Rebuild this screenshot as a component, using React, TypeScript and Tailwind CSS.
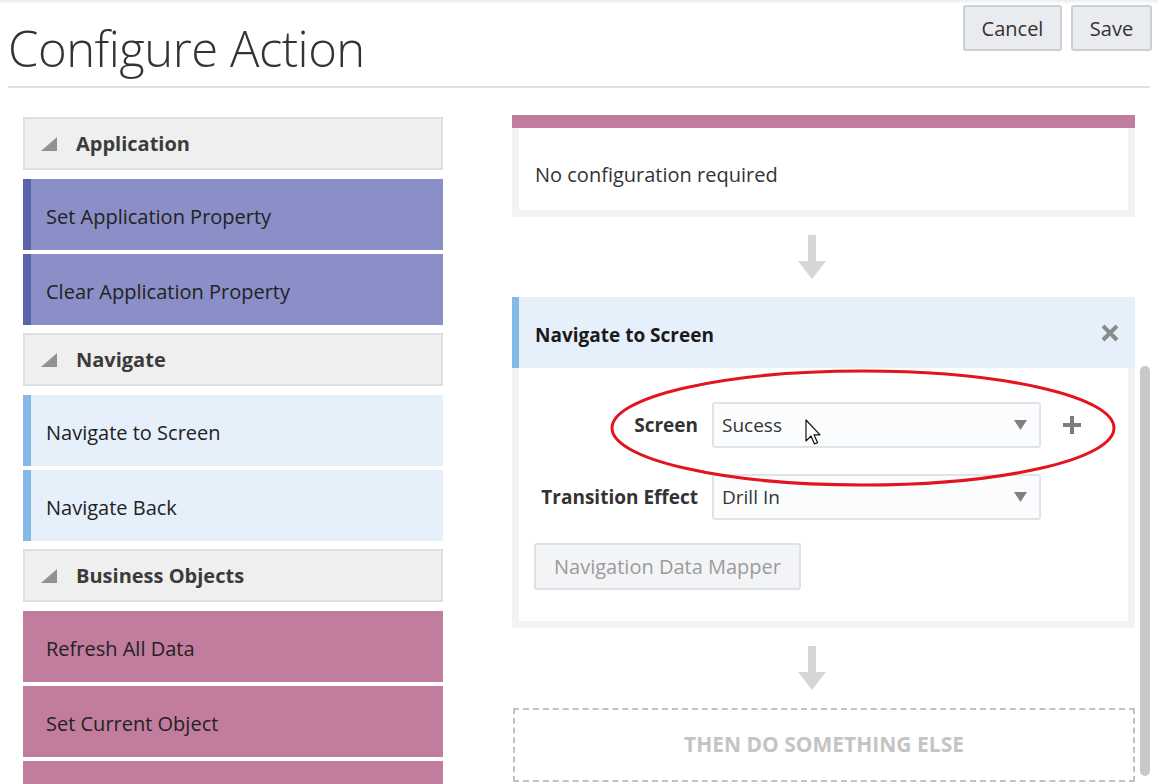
import React from "react";

const font = { fontFamily: '"Open Sans", "Noto Sans", sans-serif' };

function GroupHeader({ label }: { label: string }) {
  return (
    <div className="h-[53px] border-2 border-[#dcdfe3] bg-[#efefef] flex items-center pl-[16px]">
      <svg width="16" height="14" viewBox="0 0 16 14" className="shrink-0">
        <polygon points="16,0 16,14 0,14" fill="#8e9195" />
      </svg>
      <span className="ml-[19px] text-[20px] font-bold text-[#3b3b3b]">{label}</span>
    </div>
  );
}

function Item({ label, className }: { label: string; className: string }) {
  return (
    <div className={`h-[71px] flex items-center pt-[5px] text-[20px] text-[#222] ${className}`}>
      {label}
    </div>
  );
}

function DownArrow() {
  return (
    <div className="flex my-[18px] pl-[286px]">
      <svg width="28" height="44" viewBox="0 0 28 44">
        <rect x="10" y="0" width="8" height="28" fill="#d5d6d8" />
        <polygon points="0,26 28,26 14,44" fill="#d5d6d8" />
      </svg>
    </div>
  );
}

function Select({ value }: { value: string }) {
  return (
    <div className="w-[329px] h-[46px] border-2 border-[#e1e4e7] rounded-[3px] bg-[#fbfcfd] flex items-center justify-between pl-[8px] pr-[12px] text-[19px] text-[#333]">
      <span>{value}</span>
      <svg width="13" height="10" viewBox="0 0 13 10">
        <polygon points="0,0 13,0 6.5,10" fill="#7f8183" />
      </svg>
    </div>
  );
}

export default function App() {
  return (
    <div className="relative w-[1158px] h-[784px] overflow-hidden bg-white" style={font}>
      <div className="h-[4px] bg-gradient-to-b from-[#ececec] to-white" />

      {/* Header */}
      <div className="flex justify-between items-start pl-[8px] pr-[6px]">
        <h1 className="mt-[14px] text-[49px] leading-[60px] font-light text-[#333] tracking-[-0.5px]">
          Configure Action
        </h1>
        <div className="flex gap-[9px] mt-[1px]">
          <button className="w-[99px] h-[46px] pt-[2px] rounded-[3px] border-2 border-[#c9d0d6] bg-[#e9ebee] text-[20px] text-[#333]">
            Cancel
          </button>
          <button className="w-[81px] h-[46px] pt-[2px] rounded-[3px] border-2 border-[#c9d0d6] bg-[#e9ebee] text-[20px] text-[#333]">
            Save
          </button>
        </div>
      </div>
      <div className="mx-[8px] mt-[8px] h-[2px] bg-[#d9e1e8]" />

      <div className="flex mt-[27px]">
        {/* Left palette */}
        <div className="ml-[23px] w-[420px] flex flex-col mt-[2px]">
          <GroupHeader label="Application" />
          <div className="flex flex-col gap-[4px] mt-[9px]">
            <Item label="Set Application Property" className="bg-[#8a90c7] border-l-[8px] border-[#5a64ad] pl-[15px]" />
            <Item label="Clear Application Property" className="bg-[#8a90c7] border-l-[8px] border-[#5a64ad] pl-[15px]" />
          </div>
          <div className="mt-[8px]">
            <GroupHeader label="Navigate" />
          </div>
          <div className="flex flex-col gap-[4px] mt-[9px]">
            <Item label="Navigate to Screen" className="bg-[#e6f0fa] border-l-[8px] border-[#85b9e6] pl-[15px]" />
            <Item label="Navigate Back" className="bg-[#e6f0fa] border-l-[8px] border-[#85b9e6] pl-[15px]" />
          </div>
          <div className="mt-[8px]">
            <GroupHeader label="Business Objects" />
          </div>
          <div className="flex flex-col gap-[4px] mt-[9px]">
            <Item label="Refresh All Data" className="bg-[#c27c9e] pl-[23px]" />
            <Item label="Set Current Object" className="bg-[#c27c9e] pl-[23px]" />
            <Item label="" className="bg-[#c27c9e] pl-[23px]" />
          </div>
        </div>

        {/* Right flow */}
        <div className="ml-[69px] w-[623px] flex flex-col">
          <div className="h-[13px] bg-[#c27c9e]" />
          <div className="bg-[#f3f3f3] px-[7px] pb-[7px]">
            <div className="h-[82px] bg-white pl-[16px] pt-[32px] text-[20px] text-[#333]">
              No configuration required
            </div>
          </div>

          <DownArrow />

          <div className="h-[71px] bg-[#e6f0fa] border-l-[7px] border-[#85b9e6] flex items-center justify-between pl-[16px] pr-[15px]">
            <span className="pt-[6px] text-[19px] font-bold text-[#1a1a1a]">Navigate to Screen</span>
            <svg width="20" height="20" viewBox="0 0 20 20">
              <path d="M3 3 L17 17 M17 3 L3 17" stroke="#8a8b8d" strokeWidth="4" strokeLinecap="butt" />
            </svg>
          </div>
          <div className="bg-[#f3f3f3] px-[7px] pb-[7px]">
            <div className="h-[253px] bg-white pl-[15px] pt-[34px]">
              <div className="grid grid-cols-[164px_329px_auto] gap-x-[14px] gap-y-[26px] items-center">
                <span className="text-right text-[19px] font-bold text-[#333]">Screen</span>
                <Select value="Sucess" />
                <svg width="20" height="20" viewBox="0 0 20 20" className="ml-[7px]">
                  <path d="M10 1 V19 M1 10 H19" stroke="#7b7c7e" strokeWidth="4" />
                </svg>
                <span className="text-right text-[19px] font-bold text-[#333]">Transition Effect</span>
                <Select value="Drill In" />
                <span />
              </div>
              <button className="mt-[23px] w-[267px] h-[47px] border-2 border-[#dde0e4] rounded-[3px] bg-[#f3f4f6] text-[20px] text-[#9b9b9b]">
                Navigation Data Mapper
              </button>
            </div>
          </div>

          <DownArrow />

          <div className="h-[74px] ml-[1px] border-2 border-dashed border-[#c2c2c2] flex items-center justify-center text-[21px] font-bold text-[#c4c4c4] uppercase">
            Then do something else
          </div>
        </div>
      </div>

      {/* Scrollbar */}
      <div className="absolute left-[1140px] top-[366px] w-[10px] h-[410px] rounded-full bg-[#c9c9c9]" />

      {/* Red annotation ellipse */}
      <svg className="absolute left-0 top-0 pointer-events-none" width="1158" height="784">
        <ellipse cx="863" cy="428" rx="251" ry="57" fill="none" stroke="#e3141e" strokeWidth="3" />
      </svg>

      {/* Mouse cursor */}
      <svg className="absolute left-[805px] top-[419px]" width="16" height="28" viewBox="0 0 16 28">
        <path d="M1 1 V22 L6 17 L9.5 25 L12.5 23.6 L9 15.8 L15 15.8 Z" fill="white" stroke="#111" strokeWidth="1.2" strokeLinejoin="round" />
      </svg>
    </div>
  );
}
